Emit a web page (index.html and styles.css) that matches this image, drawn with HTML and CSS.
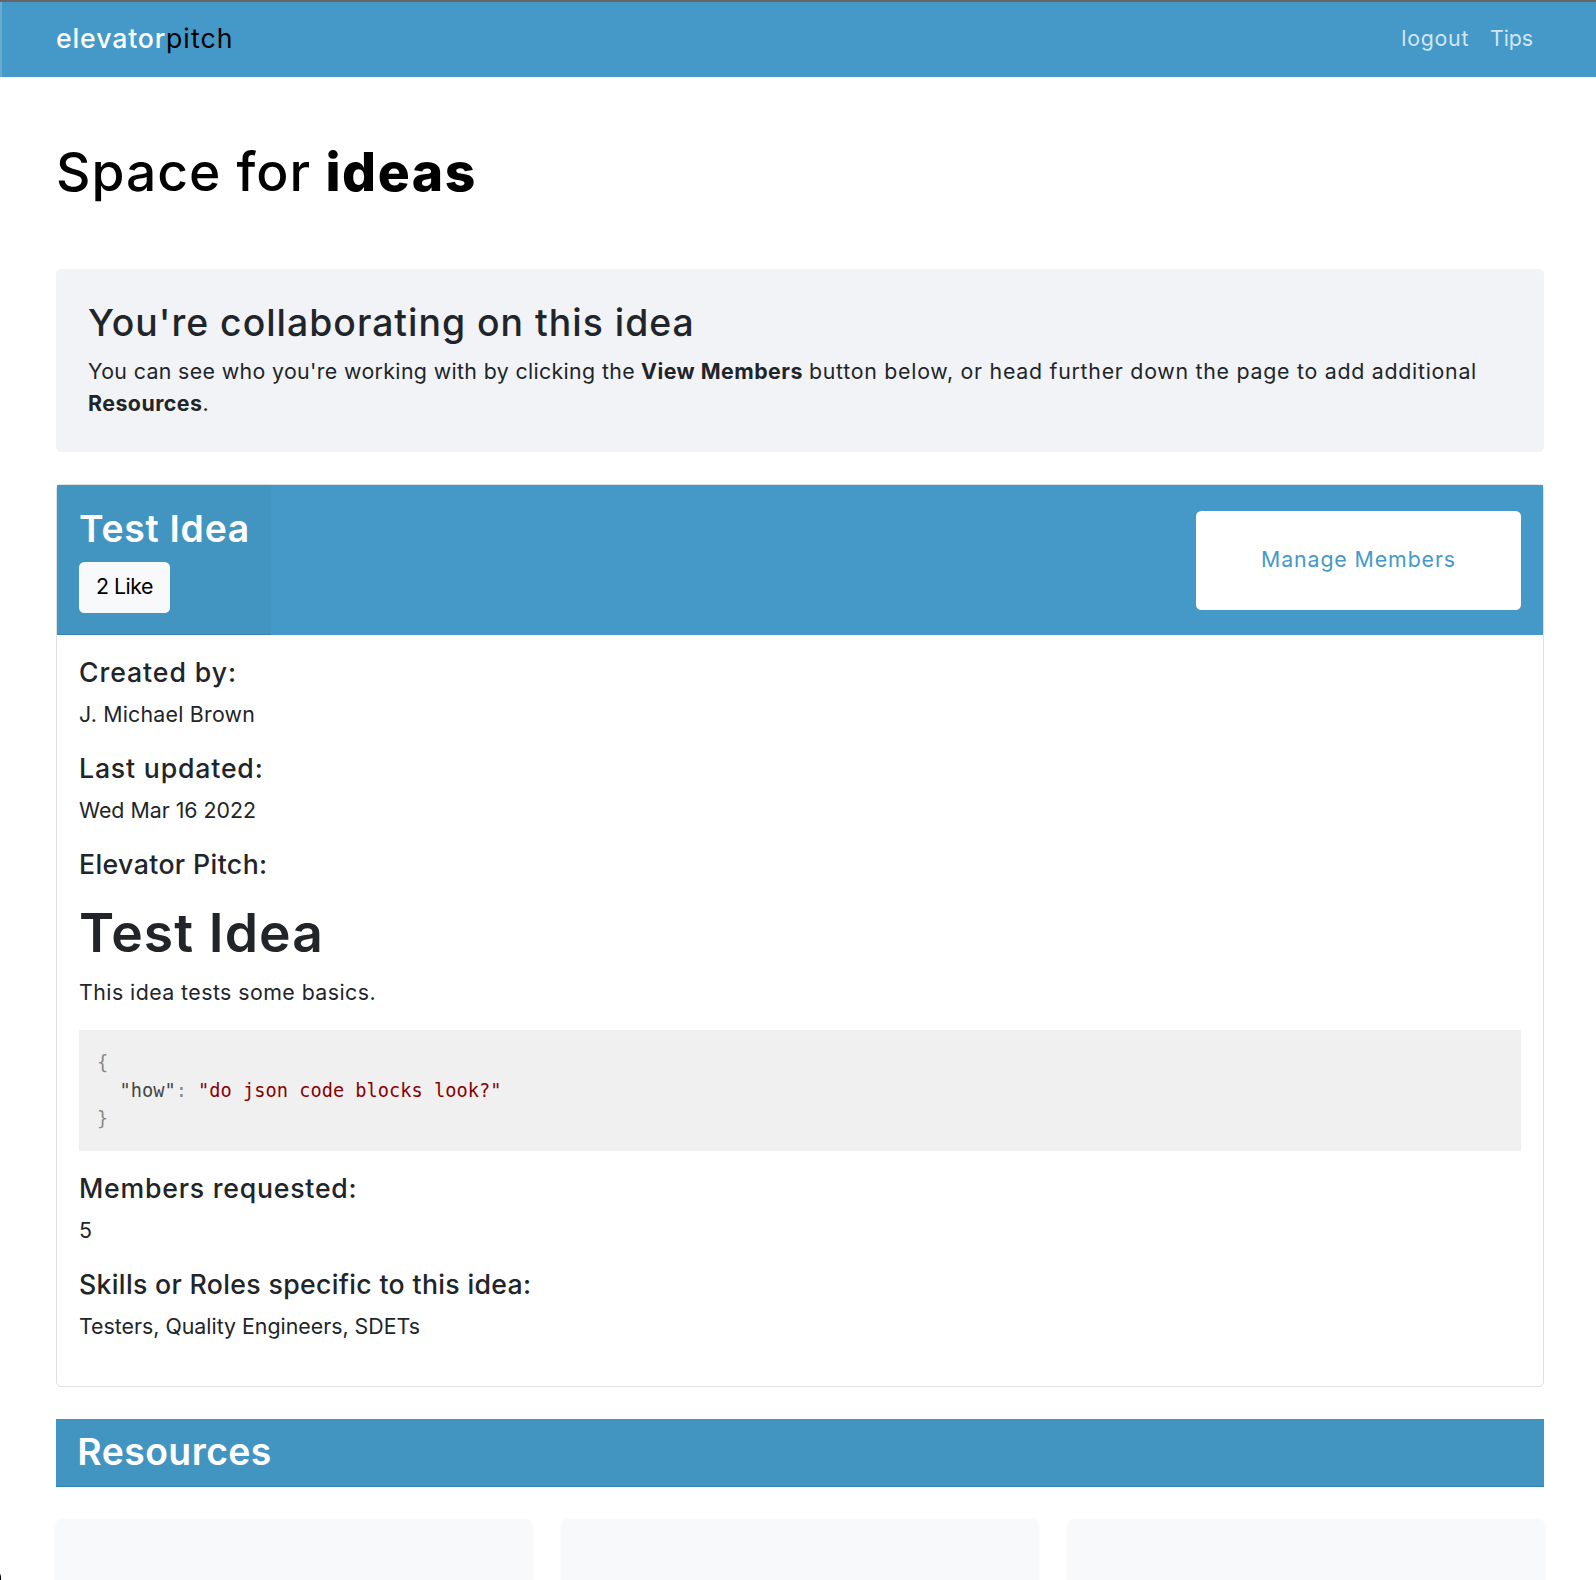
FILE: index.html
```html
<!DOCTYPE html>
<html lang="en">
<head>
<meta charset="utf-8">
<title>elevatorpitch</title>
<link rel="stylesheet" href="styles.css">
</head>
<body>
<header class="navbar">
  <a class="brand"><span class="brand-first">elevator</span><span class="brand-second">pitch</span></a>
  <nav class="nav-links"><a class="nav-logout">logout</a><a class="nav-tips">Tips</a></nav>
</header>
<main class="container">
  <h1 class="page-title"><span class="title-lead">Space for</span> <strong class="title-strong">ideas</strong></h1>
  <section class="notice">
    <h3 class="notice-title">You're collaborating on this idea</h3>
    <p class="notice-text"><span class="notice-start">You can see who you're working with by clicking the</span> <strong class="notice-strong">View Members</strong> <span class="notice-end">button below, or head further down the page to add additional</span><br><strong class="notice-strong">Resources</strong>.</p>
  </section>
  <section class="card">
    <div class="card-header">
      <div class="card-heading">
        <h3 class="idea-title">Test Idea</h3>
        <button class="like">2 Like</button>
      </div>
      <button class="manage">Manage Members</button>
    </div>
    <div class="card-body">
      <h5 class="label label-created">Created by:</h5>
      <p class="value value-author">J. Michael Brown</p>
      <h5 class="label label-updated">Last updated:</h5>
      <p class="value">Wed Mar 16 2022</p>
      <h5 class="label label-pitch">Elevator Pitch:</h5>
      <h1 class="pitch-title">Test Idea</h1>
      <p class="value value-pitch">This idea tests some basics.</p>
<pre class="code"><span class="punct">{</span>
  <span class="key">"how"</span><span class="punct">:</span> <span class="string">"do json code blocks look?"</span>
<span class="punct">}</span></pre>
      <h5 class="label label-members">Members requested:</h5>
      <p class="value">5</p>
      <h5 class="label">Skills or Roles specific to this idea:</h5>
      <p class="value">Testers, Quality Engineers, SDETs</p>
    </div>
  </section>
  <h3 class="resources-title">Resources</h3>
  <section class="resources"><div class="resource"></div><div class="resource"></div><div class="resource"></div></section>
</main>
<div class="window-corner"></div>
</body>
</html>
```
FILE: styles.css
```css
* { box-sizing: border-box; }
html { font-size: 21.333px; }
body {
  position: relative;
  margin: 0;
  height: 1580px;
  overflow: hidden;
  background: #fff;
  color: #212529;
  font-family: Inter, "Noto Sans", sans-serif;
  font-size: 1rem;
  line-height: 1.5;
}
h1, h3, h5, p { margin: 0; }
h1, h3, h5 { font-weight: 500; line-height: 1.2; white-space: nowrap; }
h3 { font-size: 1.75rem; }
button { border: 0; font: inherit; border-radius: 5.3px; }

.navbar {
  display: flex;
  align-items: center;
  justify-content: space-between;
  height: 77px;
  padding: 0 63px 3px 56px;
  border-top: 2px solid #666;
  background: linear-gradient(to right, #68abd0 2px, #4599c8 2px);
}
.brand { font-size: 1.25rem; color: #000; }
.brand-first { color: #fff; font-weight: 500; letter-spacing: 0.869px; }
.brand-second { letter-spacing: 1.053px; }
.nav-links { display: flex; gap: 20.8px; padding-top: 2px; color: #d1e6f2; }
.nav-logout { letter-spacing: 0.76px; }
.nav-tips { letter-spacing: -0.063px; }

.container { padding: 0 52px 0 56px; }
.page-title { padding: 63px 0 65px; font-size: 2.5rem; color: #000; }
.title-lead { letter-spacing: 1px; }
.title-strong { font-weight: 800; letter-spacing: 1.6px; }

.notice { height: 183px; padding: 32px; border-radius: 5.3px; background: #f1f3f7; }
.notice-title { margin-bottom: 0.5rem; letter-spacing: 1.01px; }
.notice-text { white-space: nowrap; }
.notice-start { letter-spacing: 0.362px; }
.notice-strong { letter-spacing: 0.48px; }
.notice-end { letter-spacing: 0.735px; }

.card { margin-top: 32px; border: 1px solid #dfdfdf; border-radius: 5.3px; }
.card-header {
  display: flex;
  align-items: center;
  justify-content: space-between;
  height: 150px;
  padding-right: 22px;
  background: #4599c8;
}
.card-heading {
  align-self: stretch;
  width: 214px;
  padding: 22px;
  border-bottom: 1px solid #3c85ae;
  background: #4294c1;
}
.idea-title { margin-bottom: 10px; color: #fff; font-weight: 600; letter-spacing: 0.734px; }
.like { display: block; width: 91px; height: 51px; padding: 0; background: #f8f9fa; color: #000; letter-spacing: -0.484px; }
.manage { width: 325px; height: 99px; margin-top: 1px; background: #fff; color: #4599c8; letter-spacing: 0.893px; }

.card-body { padding: 21.5px 22px 43.2px; }
.label { margin-bottom: 0.5rem; font-size: 1.25rem; letter-spacing: 0.335px; }
.label-created { letter-spacing: 0.92px; }
.label-updated { letter-spacing: 0.82px; }
.label-pitch { letter-spacing: 0.39px; }
.label-members { letter-spacing: 0.77px; }
.value { margin-bottom: 1rem; }
.value:last-child { margin-bottom: 0; }
.value-author { letter-spacing: 0.219px; }
.value-pitch { letter-spacing: 0.445px; }
.pitch-title { margin: 20.8px 0 11.8px; font-size: 2.5rem; font-weight: 600; letter-spacing: 1.127px; }
.pitch-title + .value { margin-bottom: 20.9px; }
.code {
  margin: 0 0 1rem;
  padding: 19px 18px 18px;
  background: #f0f0f0;
  font: 18.67px/28px "DejaVu Sans Mono", monospace;
}
.punct { color: #888; }
.key { color: #444; }
.string { color: #800; }

.resources-title {
  height: 68px;
  margin-top: 32px;
  padding: 0.5rem 1rem;
  border-bottom: 1px solid #3581ad;
  background: #4294c1;
  color: #fff;
  font-weight: 600;
  letter-spacing: 0.46px;
}
.resources { display: grid; grid-template-columns: repeat(3, 1fr); gap: 30px; margin-top: 32px; }
.resource { height: 100px; border-radius: 5.3px; background: #f8f9fa; box-shadow: 0 2px 4px rgba(0, 0, 0, 0.05); }
.window-corner {
  position: absolute;
  left: 0;
  bottom: 0;
  width: 1px;
  height: 6px;
  background: linear-gradient(#aaa, #000 50%);
}
```
